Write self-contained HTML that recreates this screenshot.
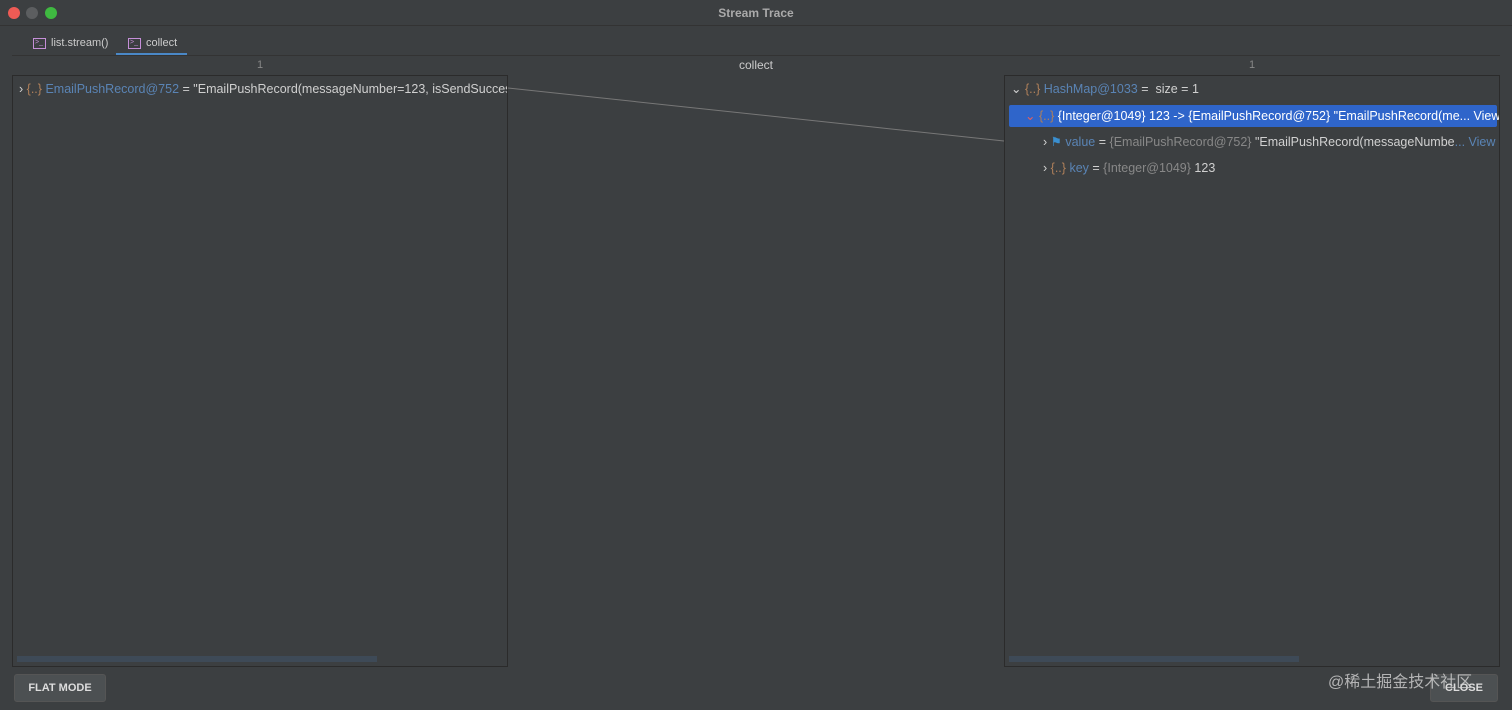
<!DOCTYPE html>
<html><head><meta charset="utf-8"><style>
*{margin:0;padding:0;box-sizing:border-box}
body{width:1512px;height:710px;background:#3c3f41;font-family:"Liberation Sans",sans-serif;font-size:12px;color:#bbb;position:relative;overflow:hidden}
.a{position:absolute}
.tb{top:0;left:0;width:1512px;height:26px;background:#3c3f41;border-bottom:1px solid #333}
.dot{width:12px;height:12px;border-radius:50%;top:7px}
.panel{border:1px solid #2b2b2b;background:#3c3f41}
.row{position:absolute;height:22px;line-height:22px;white-space:nowrap;font-size:12.5px}
.g{color:#888}.b{color:#5a84b5}.w{color:#d0d0d0}.o{color:#b0805a}
.btn{background:#4c5052;border:1px solid #555;border-radius:3px;color:#ddd;font-size:11px;font-weight:bold;text-align:center;line-height:26px}
.tab{display:flex;align-items:center;height:14px;font-size:11px;color:#ccc}
.ic{display:inline-block;width:13px;height:11px;border:1px solid #c58fd8;margin-right:5px;font-size:7px;line-height:8px;color:#c58fd8;padding-left:1px}
</style></head><body>
<div class="a tb"></div>
<div class="a dot" style="left:8px;background:#ee5b55"></div>
<div class="a dot" style="left:26px;background:#5c5e60"></div>
<div class="a dot" style="left:45px;background:#3fb941"></div>
<div class="a" style="top:6px;left:0;width:1512px;text-align:center;font-weight:bold;color:#aaa;font-size:12px">Stream Trace</div>
<div class="a tab" style="top:36px;left:33px"><span class="ic">&gt;_</span>list.stream()</div>
<div class="a tab" style="top:36px;left:128px"><span class="ic">&gt;_</span>collect</div>
<div class="a" style="top:53px;left:116px;width:71px;height:3px;background:#4a88c7"></div>
<div class="a" style="top:55px;left:12px;width:1488px;height:1px;background:#333"></div>
<div class="a g" style="top:59px;left:257px;font-size:11px">1</div>
<div class="a" style="top:58px;left:0;width:1512px;text-align:center;color:#ccc">collect</div>
<div class="a g" style="top:59px;left:1249px;font-size:11px">1</div>
<div class="a panel" style="left:12px;top:75px;width:496px;height:592px;overflow:hidden">
<div class="row" style="left:6px;top:2px"><span class="w">›</span> <span class="o">{..}</span> <span class="b">EmailPushRecord@752</span> <span class="w">= "EmailPushRecord(messageNumber=123, isSendSuccess</span></div>
<div class="a" style="left:4px;top:580px;width:360px;height:6px;background:#3e4a57"></div>
</div>
<div class="a panel" style="left:1004px;top:75px;width:496px;height:592px;overflow:hidden">
<div class="row" style="left:6px;top:2px"><span class="w">⌄</span> <span class="o">{..}</span> <span class="b">HashMap@1033</span> <span class="w">= &nbsp;size = 1</span></div>
<div class="a" style="left:4px;top:29px;width:488px;height:22px;background:#2f65ca;border-radius:2px"></div>
<div class="row" style="left:20px;top:29px;color:#fff"><span style="color:#e06060">⌄</span> <span class="o">{..}</span> {Integer@1049} 123 -&gt; {EmailPushRecord@752} "EmailPushRecord(me... View</div>
<div class="row" style="left:38px;top:55px"><span class="w">›</span> <span style="color:#3a8fd0">⚑</span> <span class="b">value</span> <span class="w">=</span> <span class="g">{EmailPushRecord@752}</span> <span class="w">"EmailPushRecord(messageNumbe</span><span class="b">... View</span></div>
<div class="row" style="left:38px;top:81px"><span class="w">›</span> <span class="o">{..}</span> <span class="b">key</span> <span class="w">=</span> <span class="g">{Integer@1049}</span> <span class="w">123</span></div>
<div class="a" style="left:4px;top:580px;width:290px;height:6px;background:#3e4a57"></div>
</div>
<svg class="a" style="left:0;top:0" width="1512" height="710"><line x1="508" y1="88" x2="1004" y2="141" stroke="#777" stroke-width="1"/></svg>
<div class="a btn" style="left:14px;top:674px;width:92px;height:28px">FLAT MODE</div>
<div class="a btn" style="left:1430px;top:674px;width:68px;height:28px">CLOSE</div>
<div class="a" style="left:1328px;top:668px;font-size:16px;color:rgba(210,210,210,0.8);font-family:'Liberation Sans','Noto Sans CJK SC',sans-serif">@稀土掘金技术社区</div>
</body></html>
